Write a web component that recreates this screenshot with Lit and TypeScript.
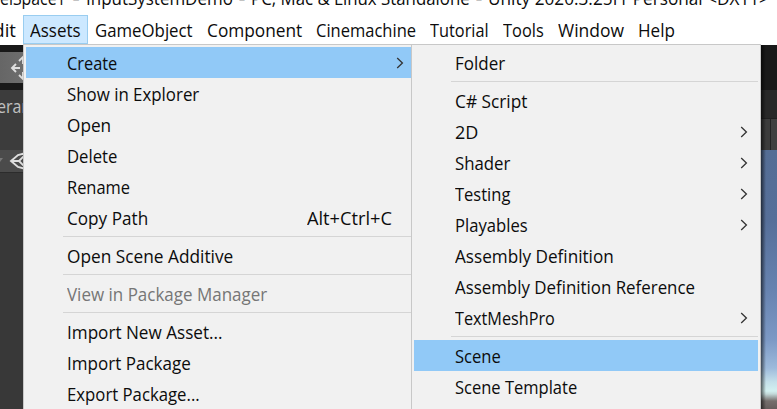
import { LitElement, html, css, svg } from "lit";
import { customElement, property } from "lit/decorators.js";

type Item = { label: string; w: number; hint?: string; hintW?: number; sub?: boolean; on?: boolean; off?: boolean } | null;

const assets: Item[] = [
  { label: "Create", w: 50, sub: true, on: true },
  { label: "Show in Explorer", w: 132 },
  { label: "Open", w: 44 },
  { label: "Delete", w: 50 },
  { label: "Rename", w: 63 },
  { label: "Copy Path", w: 81, hint: "Alt+Ctrl+C", hintW: 85 },
  null,
  { label: "Open Scene Additive", w: 166 },
  null,
  { label: "View in Package Manager", w: 200, off: true },
  null,
  { label: "Import New Asset...", w: 156 },
  { label: "Import Package", w: 124 },
  { label: "Export Package...", w: 133 },
];

const create: Item[] = [
  { label: "Folder", w: 50 },
  null,
  { label: "C# Script", w: 72 },
  { label: "2D", w: 23, sub: true },
  { label: "Shader", w: 55, sub: true },
  { label: "Testing", w: 55, sub: true },
  { label: "Playables", w: 73, sub: true },
  { label: "Assembly Definition", w: 159 },
  { label: "Assembly Definition Reference", w: 240 },
  { label: "TextMeshPro", w: 100, sub: true },
  null,
  { label: "Scene", w: 46, on: true },
  { label: "Scene Template", w: 122 },
];

/* A single line of text condensed to a given advance width. */
@customElement("fit-text")
export class FitText extends LitElement {
  @property() text = "";
  @property({ type: Number }) w = 0;

  static styles = css`
    :host { display: block; flex: none; white-space: pre; }
    .t { display: inline-block; transform-origin: 0 50%; }
  `;

  updated() {
    const t = this.renderRoot.querySelector(".t") as HTMLElement;
    this.style.width = `${this.w}px`;
    t.style.transform = `scaleX(${this.w / t.offsetWidth})`;
  }

  render() {
    return html`<span class="t">${this.text}</span>`;
  }
}

@customElement("menu-panel")
export class MenuPanel extends LitElement {
  @property({ attribute: false }) items: Item[] = [];

  static styles = css`
    :host { display: block; box-sizing: border-box; background: #f1f1f1; border-top: 1px solid #c8c8c8; border-left: 1px solid #c8c8c8; padding: 2px 0 0 2px; }
    .row { height: 31px; display: flex; align-items: center; padding-left: 41px; }
    .on { background: #91c9f7; }
    .off { color: #767676; }
    .sep { height: 7px; display: flex; align-items: center; padding-left: 37px; }
    .line { height: 1px; flex: 1; background: #d5d5d5; }
    .gap { flex: 1; }
    .hint { margin-right: 19px; }
    svg { width: 8px; height: 12px; margin-right: 7px; fill: none; stroke: #333; stroke-width: 1.3; }
    :host(.second) svg { margin-right: 10px; }
  `;

  render() {
    return this.items.map((i) =>
      i === null
        ? html`<div class="sep"><div class="line"></div></div>`
        : html`<div class="row ${i.on ? "on" : ""} ${i.off ? "off" : ""}">
            <fit-text .text=${i.label} .w=${i.w}></fit-text>
            <div class="gap"></div>
            ${i.hint ? html`<fit-text class="hint" .text=${i.hint} .w=${i.hintW ?? 0}></fit-text>` : ""}
            ${i.sub ? html`<svg viewBox="0 0 8 12">${svg`<path d="M1.2 1L6.4 6L1.2 11"/>`}</svg>` : ""}
          </div>`
    );
  }
}

@customElement("app-root")
export class AppRoot extends LitElement {
  static styles = css`
    :host { display: flex; flex-direction: column; width: 777px; height: 409px; overflow: hidden; background: #fff; color: #0c0c0c; font: 18px/24px "Open Sans", "Noto Sans", sans-serif; }
    .title { height: 15px; flex: none; display: flex; align-items: flex-end; }
    .title fit-text { margin-bottom: 5px; }
    .bar { height: 29px; flex: none; display: flex; gap: 14px; }
    .bar div { display: flex; align-items: center; box-sizing: border-box; height: 29px; }
    .bar .edit { width: 23px; margin-right: -14px; }
    .edit fit-text { margin-left: -17px; }
    .bar .assets { width: 65px; padding-left: 7px; margin-right: -7px; background: #cce8ff; box-shadow: inset 0 0 0 1px #99cdf0; }
    .body { flex: 1; display: flex; min-height: 0; }
    .left { width: 23px; margin-top: 1px; flex: none; overflow: hidden; display: flex; flex-direction: column; background: #383838; }
    .left svg { display: block; fill: none; stroke: #dedede; stroke-width: 1.9; }
    .black { background: #191919; height: 7px; flex: none; }
    .tool { height: 31px; flex: none; background: linear-gradient(90deg, #666, #6d6d6d); }
    .tab { height: 60px; flex: none; background: #3c3c3c; color: #c0c0c0; overflow: hidden; font-size: 18px; }
    .tab fit-text { margin: 4px 0 0 -3px; }
    .row { height: 22px; flex: none; background: #4b4b4b; border-bottom: 1px solid #2c2c2c; }
    menu-panel { width: 388px; flex: none; }
    menu-panel.second { width: 350px; border-right: 1px solid #c8c8c8; padding-right: 2px; }
    .right { width: 16px; margin-top: 1px; flex: none; display: flex; flex-direction: column; position: relative; }
    .right::after { content: ""; position: absolute; inset: 0 auto 0 0; width: 5px; background: linear-gradient(90deg, #0009, #0000); }
    .r1 { height: 45px; flex: none; background: #191919; }
    .r2 { height: 28px; flex: none; background: #282828; }
    .r3 { height: 32px; flex: none; box-sizing: border-box; border-top: 1px solid #202020; background: linear-gradient(90deg, #3c3c3c 9px, #232323 9px 10px, #404040 10px); }
    .sky { flex: 1; background: linear-gradient(#546d95 0, #566f99 70px, #6783b0 140px, #7c99c5 190px, #9dbadb 218px, #c4e0ea 232px, #d2f0f0 241px, #c2d8d8 244px, #756e6c 251px, #665d5c); }
  `;

  render() {
    const title: [string, number][] = [
      ["elSpace1", 66],
      [" - ", 20],
      ["InputSystemDemo", 147],
      [" - ", 18],
      ["PC, Mac & Linux Standalone", 219],
      [" - ", 18],
      ["Unity 2020.3.25f1 Personal <DX11>", 281],
    ];
    const menus: [string, number][] = [
      ["GameObject", 98],
      ["Component", 95],
      ["Cinemachine", 100],
      ["Tutorial", 59],
      ["Tools", 41],
      ["Window", 66],
      ["Help", 37],
    ];
    return html`
      <div class="title">${title.map(([t, w]) => html`<fit-text .text=${t} .w=${w}></fit-text>`)}</div>
      <div class="bar">
        <div class="edit"><fit-text .text=${"Edit"} .w=${33}></fit-text></div>
        <div class="assets"><fit-text .text=${"Assets"} .w=${51}></fit-text></div>
        ${menus.map(([t, w]) => html`<div><fit-text .text=${t} .w=${w}></fit-text></div>`)}
      </div>
      <div class="body">
        <div class="left">
          <div class="black"></div>
          <div class="tool">
            <svg width="36" height="31" viewBox="0 0 36 31">
              <path d="M12 16H20M16 12L12 16L16 20M19 9L23 5L27 9M23 5V12M19 23L23 27L27 23M23 27V20" />
            </svg>
          </div>
          <div class="black"></div>
          <div class="tab"><fit-text .text=${"erarchy"} .w=${57}></fit-text></div>
          <div class="row">
            <svg width="36" height="22" viewBox="0 0 36 22">
              <path d="M-2 8H3L0 12Z" fill="#777" stroke="none" />
              <path d="M26 3L18 5L11 11L18 17L26 19M11 11H19L25 5M19 11L25 17" />
            </svg>
          </div>
        </div>
        <menu-panel .items=${assets}></menu-panel>
        <menu-panel class="second" .items=${create}></menu-panel>
        <div class="right">
          <div class="r1"></div>
          <div class="r2"></div>
          <div class="r3"></div>
          <div class="sky"></div>
        </div>
      </div>
    `;
  }
}
